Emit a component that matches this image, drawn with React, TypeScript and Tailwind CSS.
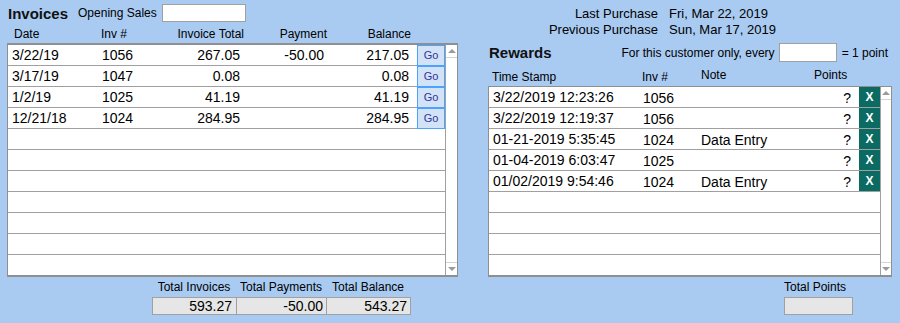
import React from 'react';

const invoices = [
  { date: '3/22/19', inv: '1056', total: '267.05', payment: '-50.00', balance: '217.05' },
  { date: '3/17/19', inv: '1047', total: '0.08', payment: '', balance: '0.08' },
  { date: '1/2/19', inv: '1025', total: '41.19', payment: '', balance: '41.19' },
  { date: '12/21/18', inv: '1024', total: '284.95', payment: '', balance: '284.95' },
];

const rewards = [
  { stamp: '3/22/2019 12:23:26', inv: '1056', note: '' },
  { stamp: '3/22/2019 12:19:37', inv: '1056', note: '' },
  { stamp: '01-21-2019 5:35:45', inv: '1024', note: 'Data Entry' },
  { stamp: '01-04-2019 6:03:47', inv: '1025', note: '' },
  { stamp: '01/02/2019 9:54:46', inv: '1024', note: 'Data Entry' },
];

function ScrollBar() {
  return (
    <div className="w-[12px] border-l border-[#a0a0a0] bg-white flex flex-col justify-between">
      <div className="h-[13px] border-b border-[#d4d4d4] flex items-center justify-center">
        <div className="w-0 h-0 border-x-[4px] border-x-transparent border-b-[4px] border-b-[#9a9a9a]" />
      </div>
      <div className="h-[13px] border-t border-[#d4d4d4] flex items-center justify-center">
        <div className="w-0 h-0 border-x-[4px] border-x-transparent border-t-[4px] border-t-[#9a9a9a]" />
      </div>
    </div>
  );
}

function InvoicesPanel() {
  return (
    <div className="ml-[7px] w-[451px] pt-[4px] flex flex-col">
      {/* title row */}
      <div className="h-[18px] flex items-center">
        <span className="ml-[1px] text-[15px] font-bold leading-none text-[#111]">Invoices</span>
        <span className="ml-[10px] text-[12px] leading-none">Opening Sales</span>
        <div className="ml-[5px] w-[84px] h-[18px] bg-white border border-[#a0a0a0]" />
      </div>

      {/* column headers */}
      <div className="h-[21px] flex items-end pb-[2px] text-[12px] leading-[14px]">
        <div className="w-[94px] pl-[7px]">Date</div>
        <div className="w-[60px]">Inv #</div>
        <div className="w-[83px] text-right">Invoice Total</div>
        <div className="w-[83px] text-right">Payment</div>
        <div className="w-[84px] text-right">Balance</div>
      </div>

      {/* grid */}
      <div className="h-[234px] flex bg-white border border-[#8f8f8f] border-t-2 border-b-2">
        <div className="w-[437px] flex flex-col text-[14px]">
          {invoices.map((r) => (
            <div key={r.inv} className="h-[21px] flex shrink-0">
              <div className="flex-1 flex items-center border-b border-[#a0a0a0]">
                <div className="w-[90px] pl-[4px]">{r.date}</div>
                <div className="w-[62px] pl-[4px]">{r.inv}</div>
                <div className="w-[84px] pr-[4px] text-right">{r.total}</div>
                <div className="w-[84px] pr-[4px] text-right">{r.payment}</div>
                <div className="w-[89px] pr-[8px] text-right">{r.balance}</div>
              </div>
              <div className="w-[28px] border border-[#4aa3ff] bg-[#d2e3f8] flex items-center justify-center text-[11px] text-[#33339a]">
                Go
              </div>
            </div>
          ))}
          {Array.from({ length: 7 }).map((_, i) => (
            <div
              key={i}
              className={`h-[21px] shrink-0 ${i < 6 ? 'border-b border-[#a0a0a0]' : ''}`}
            />
          ))}
        </div>
        <ScrollBar />
      </div>

      {/* totals */}
      <div className="mt-[3px] pl-[145px] flex text-[12px] leading-[14px]">
        <div className="w-[84px] text-center">Total Invoices</div>
        <div className="w-[90px] text-center">Total Payments</div>
        <div className="w-[84px] text-center">Total Balance</div>
      </div>
      <div className="mt-[3px] ml-[145px] flex text-[14px] border-l border-[#a0a0a0]">
        <div className="w-[84px] h-[18px] bg-[#e6e6e6] border-y border-r border-[#a0a0a0] flex items-center justify-end pr-[4px]">593.27</div>
        <div className="w-[90px] h-[18px] bg-[#e6e6e6] border-y border-r border-[#a0a0a0] flex items-center justify-end pr-[3px]">-50.00</div>
        <div className="w-[84px] h-[18px] bg-[#e6e6e6] border-y border-r border-[#a0a0a0] flex items-center justify-end pr-[3px]">543.27</div>
      </div>
    </div>
  );
}

function RewardsPanel() {
  return (
    <div className="ml-[30px] w-[404px] pt-[6px] flex flex-col">
      {/* purchase dates */}
      <div className="flex flex-col text-[13px] leading-[16px]">
        <div className="h-[16px] flex">
          <div className="w-[170px] text-right">Last Purchase</div>
          <div className="ml-[11px]">Fri, Mar 22, 2019</div>
        </div>
        <div className="h-[16px] flex">
          <div className="w-[170px] text-right">Previous Purchase</div>
          <div className="ml-[11px]">Sun, Mar 17, 2019</div>
        </div>
      </div>

      {/* rewards title */}
      <div className="mt-[5px] h-[19px] flex items-center">
        <span className="ml-[1px] text-[15px] font-bold leading-none text-[#111]">Rewards</span>
        <div className="ml-auto pr-[4px] flex items-center text-[12px]">
          <span>For this customer only, every</span>
          <div className="ml-[4px] w-[58px] h-[19px] bg-white border border-[#a0a0a0]" />
          <span className="ml-[5px]">= 1 point</span>
        </div>
      </div>

      {/* column headers */}
      <div className="h-[24px] flex items-end text-[12px] leading-[14px]">
        <div className="w-[154px] pl-[4px] pb-[2px]">Time Stamp</div>
        <div className="w-[59px] pb-[2px]">Inv #</div>
        <div className="w-[113px] pb-[4px]">Note</div>
        <div className="pb-[4px]">Points</div>
      </div>

      {/* grid */}
      <div className="h-[191px] flex bg-white border border-[#8f8f8f] border-b-2">
        <div className="w-[391px] flex flex-col text-[14px]">
          {rewards.map((r, i) => (
            <div key={i} className="h-[21px] shrink-0 flex border-b border-[#a0a0a0]">
              <div className="w-[150px] pl-[4px] flex items-center">{r.stamp}</div>
              <div className="w-[58px] pl-[4px] pt-[2px] flex items-center">{r.inv}</div>
              <div className="w-[104px] pl-[4px] pt-[2px] flex items-center">{r.note}</div>
              <div className="w-[58px] pr-[8px] pt-[2px] flex items-center justify-end">?</div>
              <div className="w-[21px] bg-[#0b6b62] text-white font-bold text-[12px] flex items-center justify-center">
                X
              </div>
            </div>
          ))}
          {Array.from({ length: 4 }).map((_, i) => (
            <div
              key={i}
              className={`h-[21px] shrink-0 ${i < 3 ? 'border-b border-[#a0a0a0]' : ''}`}
            />
          ))}
        </div>
        <ScrollBar />
      </div>

      {/* total points */}
      <div className="mt-[3px] pl-[296px] text-[12px] leading-[14px]">Total Points</div>
      <div className="mt-[3px] ml-[296px] w-[69px] h-[18px] bg-[#e6e6e6] border border-[#a0a0a0]" />
    </div>
  );
}

export default function App() {
  return (
    <div className="w-[900px] h-[323px] overflow-hidden bg-[#a9cbf2] flex font-['Liberation_Sans',Arial,sans-serif] text-black">
      <InvoicesPanel />
      <RewardsPanel />
    </div>
  );
}
